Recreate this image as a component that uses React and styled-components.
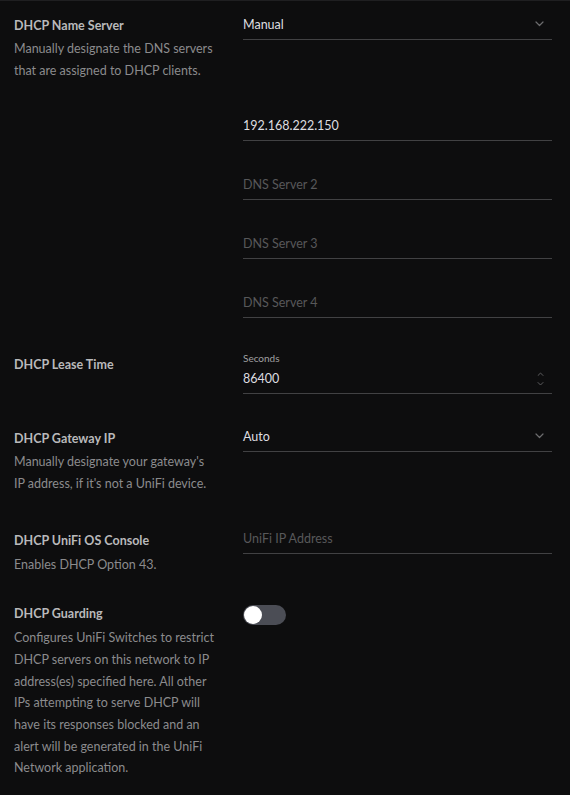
import React from "react";
import styled, { createGlobalStyle } from "styled-components";

const Global = createGlobalStyle`
  html, body { margin: 0; padding: 0; background: #0d0d0e; }
  body { font-family: Lato, "Noto Sans", sans-serif; -webkit-font-smoothing: antialiased; }
  #root { min-height: 795px; }
`;

const Page = styled.div`
  min-height: 795px;
  box-sizing: border-box;
  border-top: 1px solid #1f1f21;
  padding: 9px 18px 0 14px;
  background: #0d0d0e;
`;

const Row = styled.div`
  display: grid;
  grid-template-columns: 229px 1fr;
  align-items: start;
  margin-top: ${(p) => p.$space || 0}px;
`;

const Info = styled.div`
  padding-top: ${(p) => (p.$offset ?? 4)}px;
  display: flex;
  flex-direction: column;
`;

const Label = styled.div`
  font-size: 12.5px;
  font-weight: 700;
  line-height: 22px;
  color: #b9b9bb;
`;

const Desc = styled.div`
  margin-top: ${(p) => (p.$gap ?? 2)}px;
  font-size: 12.5px;
  line-height: 21.7px;
  color: #8b8b8d;
  max-width: 203px;
`;

const Controls = styled.div`
  display: flex;
  flex-direction: column;
`;

const FieldList = styled.div`
  display: flex;
  flex-direction: column;
  gap: 29px;
  margin-top: 71px;
`;

const Field = styled.div`
  height: 30px;
  box-sizing: border-box;
  border-bottom: 1px solid #414143;
  display: flex;
  align-items: center;
  justify-content: space-between;
  padding-right: 8px;
  padding-bottom: 1px;
  font-size: 12.5px;
  color: ${(p) => (p.$placeholder ? "#58585a" : "#dedee0")};
`;

const Caption = styled.div`
  font-size: 10px;
  line-height: 12px;
  color: #a0a0a2;
`;

const Spinner = styled.div`
  display: flex;
  flex-direction: column;
  gap: 6px;
  padding-top: 2px;
`;

const ToggleWrap = styled.div`
  height: 22px;
  display: flex;
  align-items: center;
  padding-top: 2px;
`;

const Track = styled.div`
  position: relative;
  width: 43px;
  height: 20px;
  border-radius: 10px;
  background: #4b4d55;
`;

const Knob = styled.div`
  position: absolute;
  top: 1px;
  left: 1px;
  width: 18px;
  height: 18px;
  border-radius: 50%;
  background: #ffffff;
`;

const Chevron = () => (
  <svg width="9" height="6" viewBox="0 0 9 6" fill="none">
    <path d="M1 1l3.5 3.5L8 1" stroke="#6c6c6e" strokeWidth="1.2" strokeLinecap="round" strokeLinejoin="round" />
  </svg>
);

const Tiny = ({ up }) => (
  <svg width="7" height="4" viewBox="0 0 7 4" fill="none">
    <path d={up ? "M1 3.5L3.5 1L6 3.5" : "M1 0.5L3.5 3L6 0.5"} stroke="#5c5c5e" strokeWidth="1" strokeLinecap="round" strokeLinejoin="round" />
  </svg>
);

export default function App() {
  return (
    <>
      <Global />
      <Page>
        <Row>
          <Info $offset={5}>
            <Label>DHCP Name Server</Label>
            <Desc $gap={1}>Manually designate the DNS servers that are assigned to DHCP clients.</Desc>
          </Info>
          <Controls>
            <Field>
              <span>Manual</span>
              <Chevron />
            </Field>
            <FieldList>
              <Field>192.168.222.150</Field>
              <Field $placeholder>DNS Server 2</Field>
              <Field $placeholder>DNS Server 3</Field>
              <Field $placeholder>DNS Server 4</Field>
            </FieldList>
          </Controls>
        </Row>

        <Row $space={34}>
          <Info $offset={2}>
            <Label>DHCP Lease Time</Label>
          </Info>
          <Controls>
            <Caption>Seconds</Caption>
            <Field>
              <span>86400</span>
              <Spinner>
                <Tiny up />
                <Tiny />
              </Spinner>
            </Field>
          </Controls>
        </Row>

        <Row $space={28}>
          <Info $offset={6}>
            <Label>DHCP Gateway IP</Label>
            <Desc $gap={1}>Manually designate your gateway's IP address, if it's not a UniFi device.</Desc>
          </Info>
          <Controls>
            <Field>
              <span>Auto</span>
              <Chevron />
            </Field>
          </Controls>
        </Row>

        <Row $space={30}>
          <Info $offset={6}>
            <Label>DHCP UniFi OS Console</Label>
            <Desc>Enables DHCP Option 43.</Desc>
          </Info>
          <Controls>
            <Field $placeholder>UniFi IP Address</Field>
          </Controls>
        </Row>

        <Row $space={26}>
          <Info $offset={1}>
            <Label>DHCP Guarding</Label>
            <Desc>
              Configures UniFi Switches to restrict DHCP servers on this network to IP address(es) specified here. All
              other IPs attempting to serve DHCP will have its responses blocked and an alert will be generated in the
              UniFi Network application.
            </Desc>
          </Info>
          <Controls>
            <ToggleWrap>
              <Track>
                <Knob />
              </Track>
            </ToggleWrap>
          </Controls>
        </Row>
      </Page>
    </>
  );
}
